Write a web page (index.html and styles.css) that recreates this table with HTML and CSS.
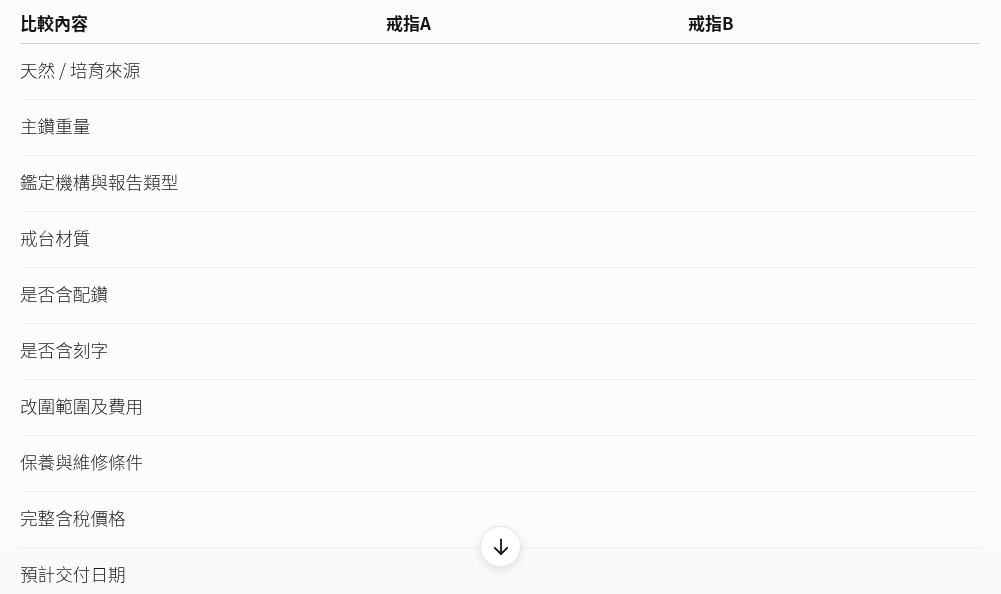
FILE: index.html
```html
<!DOCTYPE html>
<html lang="zh-Hant">
<head>
<meta charset="utf-8">
<title>戒指比較</title>
<link rel="stylesheet" href="styles.css">
</head>
<body>
<div class="fade"></div>
<div class="wrap">
  <table class="cmp">
    <colgroup>
      <col class="c1"><col class="c2"><col class="c3">
    </colgroup>
    <thead>
      <tr><th>比較內容</th><th>戒指A</th><th>戒指B</th></tr>
    </thead>
    <tbody>
      <tr><td>天然 / 培育來源</td><td></td><td></td></tr>
      <tr><td>主鑽重量</td><td></td><td></td></tr>
      <tr><td>鑑定機構與報告類型</td><td></td><td></td></tr>
      <tr><td>戒台材質</td><td></td><td></td></tr>
      <tr><td>是否含配鑽</td><td></td><td></td></tr>
      <tr><td>是否含刻字</td><td></td><td></td></tr>
      <tr><td>改圍範圍及費用</td><td></td><td></td></tr>
      <tr><td>保養與維修條件</td><td></td><td></td></tr>
      <tr><td>完整含稅價格</td><td></td><td></td></tr>
      <tr><td>預計交付日期</td><td></td><td></td></tr>
    </tbody>
  </table>
</div>
<button class="scroll-btn" aria-label="scroll down">
  <svg width="22" height="22" viewBox="0 0 22 22" fill="none" stroke="#111" stroke-width="1.8" stroke-linecap="round" stroke-linejoin="round">
    <path d="M11 3.5v14.5"/>
    <path d="M4.8 11.8L11 18l6.2-6.2"/>
  </svg>
</button>
</body>
</html>
```

FILE: styles.css
```css
html, body {
  margin: 0;
  padding: 0;
  background: #fcfcfc;
  height: 100%;
  overflow: hidden;
}
body {
  font-family: "Noto Sans CJK TC", "Noto Sans", "Liberation Sans", sans-serif;
  color: #1f1f1f;
  position: relative;
}
.wrap {
  position: relative;
  padding: 0 21px 0 20px;
}
.cmp {
  width: 960px;
  border-collapse: collapse;
  table-layout: fixed;
}
.c1 { width: 366px; }
.c2 { width: 302px; }
.c3 { width: 292px; }
.cmp th {
  text-align: left;
  font-weight: 700;
  font-size: 17px;
  line-height: 24px;
  padding: 11px 0 8px 0;
  color: #141414;
  border-bottom: 1px solid #d3d3d3;
}
.cmp td {
  font-size: 17.6px;
  font-weight: 300;
  line-height: 24px;
  padding: 14px 0 17px 0;
  color: #1c1c1c;
  border-bottom: 1px solid #efefef;
}
.fade {
  position: fixed;
  left: 0;
  right: 0;
  bottom: 0;
  height: 70px;
  background: linear-gradient(to bottom, rgba(252,252,252,0), rgba(244,244,244,0.5));
  pointer-events: none;
}
.scroll-btn {
  position: fixed;
  left: 480px;
  top: 526px;
  width: 41px;
  height: 41px;
  border-radius: 50%;
  background: #ffffff;
  border: 1px solid #e6e6e6;
  box-shadow: 0 3px 8px rgba(0,0,0,0.10);
  display: flex;
  align-items: center;
  justify-content: center;
  padding: 0;
  cursor: pointer;
}
```
